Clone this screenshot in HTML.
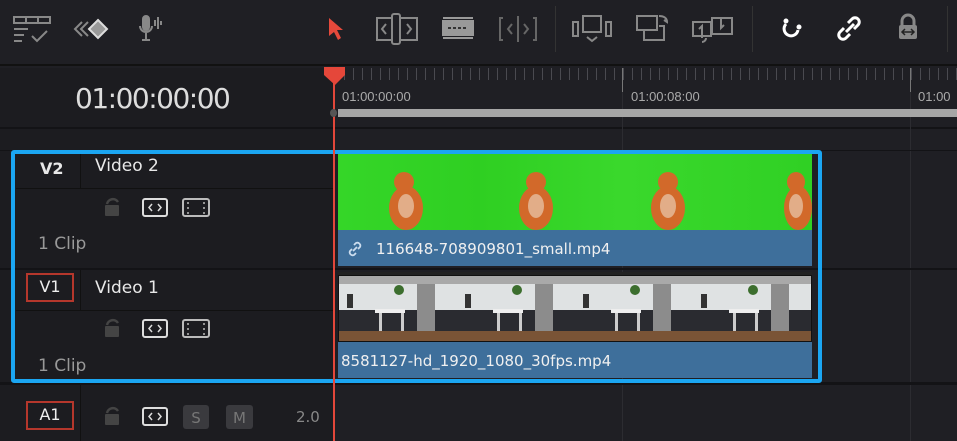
<!DOCTYPE html>
<html><head><meta charset="utf-8"><style>
*{margin:0;padding:0;box-sizing:border-box}
body{width:957px;height:441px;background:#1f1f24;overflow:hidden;position:relative;font-family:"DejaVu Sans","Liberation Sans",sans-serif;color:#ddd}
.a{position:absolute}
.tb{left:0;top:0;width:957px;height:66px;background:#1f1f24;border-bottom:2px solid #111}
.ic{position:absolute;top:12px}
.lp{background:#1c1c20}
.txt{font-size:16px;color:#e8e8e8}
.clip{font-size:16px;color:#999}
.lab{border:2px solid #b5372c;color:#eee;font-size:16px;text-align:center;line-height:24px}
.thumb{background:linear-gradient(90deg,#35d628,#2fcf22 30%,#3ad82c 60%,#30d024)}
</style></head><body>
<div class="a tb"></div>
<svg class="ic" style="left:10px" width="45" height="34" viewBox="0 0 45 34" fill="none" stroke="#888" stroke-width="2"><rect x="4" y="5" width="36" height="6"/><path d="M16 5v6M28 5v6M4 17h14M4 23h10M4 29h8M22 24l5 5 10-10" /></svg>
<svg class="ic" style="left:70px" width="45" height="34" viewBox="0 0 45 34" fill="none" stroke="#888" stroke-width="2"><path d="M12 10l-7 7 7 7M18 10l-7 7 7 7"/><path d="M28 8l9 9-9 9-9-9z" fill="#999" stroke="#ddd"/></svg>
<svg class="ic" style="left:135px" width="35" height="34" viewBox="0 0 35 34" fill="none" stroke="#888" stroke-width="2"><rect x="8" y="4" width="6" height="14" rx="3" fill="#888"/><path d="M5 14a6 6 0 0 0 12 0M11 21v7M7 28h8M20 8v6M23 5v12M26 9v4"/></svg>
<svg class="ic" style="left:324px" width="26" height="34" viewBox="0 0 26 34"><path d="M5 6l14 12h-6l4 8-3 2-4-8-5 4z" fill="#e5493b"/></svg>
<svg class="ic" style="left:374px" width="46" height="34" viewBox="0 0 46 34" fill="none" stroke="#888" stroke-width="2"><rect x="3" y="6" width="40" height="22"/><rect x="18" y="2" width="8" height="30" rx="2" fill="#1f1f24"/><path d="M12 12l-4 5 4 5M33 12l4 5-4 5"/></svg>
<svg class="ic" style="left:440px" width="36" height="34" viewBox="0 0 36 34" fill="none" stroke="#999" stroke-width="2"><rect x="3" y="9" width="30" height="14" fill="#999"/><path d="M3 6h30M3 26h30" /><path d="M8 16h20" stroke="#333" stroke-dasharray="3 2"/></svg>
<svg class="ic" style="left:497px" width="42" height="34" viewBox="0 0 42 34" fill="none" stroke="#666" stroke-width="2"><path d="M6 6h-3v22h3M36 6h3v22h-3M21 4v26M15 12l-4 5 4 5M27 12l4 5-4 5"/></svg>
<div class="a" style="left:555px;top:6px;width:1px;height:46px;background:#333"></div>
<svg class="ic" style="left:570px" width="46" height="34" viewBox="0 0 46 34" fill="none" stroke="#888" stroke-width="2"><rect x="3" y="10" width="5" height="14"/><rect x="13" y="4" width="18" height="16"/><rect x="36" y="10" width="5" height="14"/><path d="M17 25l5 4 5-4"/></svg>
<svg class="ic" style="left:634px" width="40" height="34" viewBox="0 0 40 34" fill="none" stroke="#888" stroke-width="2"><rect x="3" y="4" width="20" height="14"/><path d="M10 18v10h20V14h-5M25 4c5 0 8 2 8 6l-3-2"/></svg>
<svg class="ic" style="left:690px" width="46" height="34" viewBox="0 0 46 34" fill="none" stroke="#888" stroke-width="2"><rect x="3" y="10" width="18" height="14"/><rect x="22" y="6" width="20" height="16"/><path d="M12 26v-12l-3 3M31 6v10l3-3M12 30a4 4 0 0 0 4-4"/></svg>
<div class="a" style="left:752px;top:6px;width:1px;height:46px;background:#333"></div>
<svg class="ic" style="left:776px" width="32" height="34" viewBox="0 0 32 34" fill="none" stroke="#fff" stroke-width="3"><path d="M10 12a7 7 0 1 0 12 6"/><circle cx="10" cy="9" r="1" fill="#fff"/><circle cx="23" cy="15" r="1" fill="#fff"/></svg>
<svg class="ic" style="left:834px" width="32" height="34" viewBox="0 0 32 34" fill="none" stroke="#fff" stroke-width="3"><path d="M14 11l4-4a4 4 0 0 1 6 6l-4 4M16 22l-4 4a4 4 0 0 1-6-6l4-4M12 20l8-8"/></svg>
<svg class="ic" style="left:893px" width="30" height="34" viewBox="0 0 30 34"><path d="M9 13v-4a6 6 0 0 1 12 0v4" fill="none" stroke="#888" stroke-width="3"/><rect x="6" y="13" width="18" height="14" rx="2" fill="#888"/><path d="M10 20h10M12 17l-3 3 3 3M18 17l3 3-3 3" stroke="#222" stroke-width="1.5" fill="none"/></svg>
<div class="a" style="left:947px;top:6px;width:1px;height:46px;background:#333"></div>

<div class="a lp" style="left:0;top:68px;width:333px;height:59px"></div>
<div class="a" style="left:75px;top:82px;font-size:28px;color:#ddd;font-family:'DejaVu Sans',sans-serif;letter-spacing:-1.5px">01:00:00:00</div>
<div class="a" style="left:0;top:127px;width:957px;height:2px;background:#131316"></div>
<div class="a" style="left:622px;top:68px;width:1px;height:373px;background:#2c2c31"></div>
<div class="a" style="left:910px;top:68px;width:1px;height:373px;background:#2c2c31"></div>
<div class="a" style="left:335px;top:68px;width:622px;height:12px;background:repeating-linear-gradient(90deg,#4a4a50 0 1px,transparent 1px 9px)"></div>
<div class="a" style="left:622px;top:68px;width:1px;height:24px;background:#777"></div>
<div class="a" style="left:910px;top:68px;width:1px;height:24px;background:#777"></div>
<div class="a" style="left:342px;top:89px;font-size:13px;color:#aaa;font-family:'Liberation Sans',sans-serif">01:00:00:00</div>
<div class="a" style="left:631px;top:89px;font-size:13px;color:#aaa;font-family:'Liberation Sans',sans-serif">01:00:08:00</div>
<div class="a" style="left:918px;top:89px;font-size:13px;color:#aaa;font-family:'Liberation Sans',sans-serif">01:00</div>
<div class="a" style="left:338px;top:109px;width:619px;height:8px;background:#a6a6a6"></div>

<div class="a lp" style="left:0;top:129px;width:333px;height:312px"></div>
<div class="a" style="left:0;top:150px;width:957px;height:1px;background:#131316"></div>
<div class="a" style="left:0;top:268px;width:957px;height:2px;background:#131316"></div>
<div class="a" style="left:0;top:382px;width:957px;height:3px;background:#131316"></div>
<div class="a" style="left:16px;top:188px;width:317px;height:1px;background:#111"></div>
<div class="a" style="left:16px;top:310px;width:317px;height:1px;background:#111"></div>
<div class="a" style="left:80px;top:151px;width:1px;height:37px;background:#111"></div>
<div class="a" style="left:80px;top:270px;width:1px;height:40px;background:#111"></div>
<div class="a" style="left:80px;top:385px;width:1px;height:56px;background:#111"></div>

<div class="a txt" style="left:40px;top:159px;font-weight:bold">V2</div>
<div class="a txt" style="left:95px;top:156px;font-size:17px">Video 2</div>
<div class="a clip" style="left:38px;top:234px;font-size:17px">1 Clip</div>
<div class="a lab" style="left:26px;top:273px;width:48px;height:29px">V1</div>
<div class="a txt" style="left:95px;top:278px;font-size:17px">Video 1</div>
<div class="a clip" style="left:38px;top:356px;font-size:17px">1 Clip</div>
<div class="a lab" style="left:26px;top:401px;width:48px;height:29px">A1</div>
<div class="a" style="left:296px;top:408px;font-size:15px;color:#888">2.0</div>

<svg class="a" style="left:103px;top:196px" width="110" height="24" viewBox="0 0 110 24"><path d="M4 8a6 6 0 0 1 11-2" fill="none" stroke="#444" stroke-width="2.5"/><rect x="2" y="9" width="14" height="11" rx="1" fill="#444"/><rect x="40" y="3" width="24" height="17" rx="2" fill="none" stroke="#ddd" stroke-width="2"/><path d="M49 8l-3 3.5 3 3.5M55 8l3 3.5-3 3.5" stroke="#ddd" stroke-width="1.5" fill="none"/><rect x="80" y="3" width="26" height="17" rx="2" fill="none" stroke="#bbb" stroke-width="2"/><path d="M85 6v2M85 11v2M85 16v2M101 6v2M101 11v2M101 16v2" stroke="#bbb" stroke-width="1.5"/></svg>
<svg class="a" style="left:103px;top:317px" width="110" height="24" viewBox="0 0 110 24"><path d="M4 8a6 6 0 0 1 11-2" fill="none" stroke="#444" stroke-width="2.5"/><rect x="2" y="9" width="14" height="11" rx="1" fill="#444"/><rect x="40" y="3" width="24" height="17" rx="2" fill="none" stroke="#ddd" stroke-width="2"/><path d="M49 8l-3 3.5 3 3.5M55 8l3 3.5-3 3.5" stroke="#ddd" stroke-width="1.5" fill="none"/><rect x="80" y="3" width="26" height="17" rx="2" fill="none" stroke="#bbb" stroke-width="2"/><path d="M85 6v2M85 11v2M85 16v2M101 6v2M101 11v2M101 16v2" stroke="#bbb" stroke-width="1.5"/></svg>
<svg class="a" style="left:103px;top:405px" width="160" height="26" viewBox="0 0 160 26"><path d="M4 8a6 6 0 0 1 11-2" fill="none" stroke="#444" stroke-width="2.5"/><rect x="2" y="9" width="14" height="11" rx="1" fill="#444"/><rect x="40" y="3" width="24" height="17" rx="2" fill="none" stroke="#ddd" stroke-width="2"/><path d="M49 8l-3 3.5 3 3.5M55 8l3 3.5-3 3.5" stroke="#ddd" stroke-width="1.5" fill="none"/><rect x="80" y="0" width="26" height="24" rx="3" fill="#3a3a3e"/><text x="93" y="18" font-size="15" fill="#777" text-anchor="middle" font-family="DejaVu Sans">S</text><rect x="123" y="0" width="27" height="24" rx="3" fill="#3a3a3e"/><text x="136.5" y="18" font-size="15" fill="#777" text-anchor="middle" font-family="DejaVu Sans">M</text></svg>

<div class="a thumb" style="left:338px;top:154px;width:474px;height:76px"></div>
<svg class="a" style="left:338px;top:154px" width="474" height="76" viewBox="0 0 474 76"><g fill="#d2692a"><ellipse cx="68" cy="54" rx="17" ry="22"/><ellipse cx="66" cy="28" rx="10" ry="10"/><ellipse cx="198" cy="54" rx="17" ry="22"/><ellipse cx="198" cy="28" rx="10" ry="10"/><ellipse cx="330" cy="54" rx="17" ry="22"/><ellipse cx="330" cy="28" rx="10" ry="10"/><ellipse cx="460" cy="54" rx="14" ry="22"/><ellipse cx="458" cy="28" rx="9" ry="10"/></g><g fill="#e8cbb0" opacity=".7"><ellipse cx="68" cy="52" rx="8" ry="12"/><ellipse cx="198" cy="52" rx="8" ry="12"/><ellipse cx="330" cy="52" rx="8" ry="12"/><ellipse cx="458" cy="52" rx="7" ry="12"/></g></svg>
<div class="a" style="left:338px;top:230px;width:474px;height:36px;background:#3e6f9b"></div>
<svg class="a" style="left:346px;top:240px" width="18" height="18" viewBox="0 0 18 18" fill="none" stroke="#cde" stroke-width="1.8"><path d="M8 5l2-2a3 3 0 0 1 4 4l-2 2M10 13l-2 2a3 3 0 0 1-4-4l2-2M7 11l4-4"/></svg>
<div class="a" style="left:376px;top:240px;font-size:15px;color:#f0f0f0">116648-708909801_small.mp4</div>

<div class="a" style="left:338px;top:272px;width:474px;height:3px;background:#222"></div>
<div class="a" style="left:338px;top:275px;width:474px;height:67px;background:#111"></div>
<svg class="a" style="left:339px;top:276px" width="472" height="65" viewBox="0 0 472 65" preserveAspectRatio="none"><defs><g id="k"><rect width="118" height="65" fill="#dfe2e3"/><rect y="0" width="118" height="8" fill="#a9a9a9"/><rect y="34" width="118" height="22" fill="#2a2b30"/><rect y="55" width="118" height="10" fill="#7a5436"/><rect x="78" y="8" width="18" height="47" fill="#8c8c8c"/><rect x="36" y="33" width="30" height="4" fill="#eee"/><rect x="40" y="37" width="3" height="18" fill="#ccc"/><rect x="62" y="37" width="3" height="18" fill="#ccc"/><circle cx="60" cy="14" r="5" fill="#3c6e2e"/><rect x="8" y="18" width="6" height="14" fill="#333"/></g></defs><use href="#k" x="0"/><use href="#k" x="118"/><use href="#k" x="236"/><use href="#k" x="354"/></svg>
<div class="a" style="left:338px;top:342px;width:474px;height:36px;background:#3e6f9b"></div>
<div class="a" style="left:341px;top:352px;font-size:15px;color:#f0f0f0">8581127-hd_1920_1080_30fps.mp4</div>

<div class="a" style="left:11px;top:150px;width:811px;height:233px;border:4px solid #1ba6f2;border-radius:3px"></div>

<div class="a" style="left:333px;top:80px;width:2px;height:361px;background:#e2473a"></div>
<svg class="a" style="left:322px;top:67px" width="25" height="24" viewBox="0 0 25 24"><path d="M2 0h21v8l-10 10-11-10z" fill="#e5473a"/></svg>
<div class="a" style="left:330px;top:109px;width:7px;height:8px;border-radius:50%;background:#555"></div>
</body></html>
